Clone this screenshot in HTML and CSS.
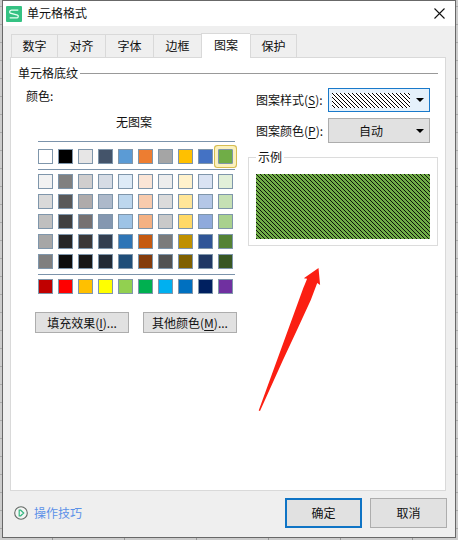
FILE: index.html
```html
<!DOCTYPE html>
<html lang="zh-CN">
<head>
<meta charset="utf-8">
<title>单元格格式</title>
<link rel="stylesheet" href="styles.css">
</head>
<body>
<main class="dialog">
  <header class="titlebar">
    <svg class="logo" width="16" height="16" viewBox="0 0 16 16"><rect width="16" height="16" rx="1" fill="#35c283"/><path d="M12.3 4.2H5.4a1.7 1.7 0 0 0-1.100 3l7.200 1.900a1.500 1.500 0 0 1-.9 2.800H3.700" fill="none" stroke="#e9fff3" stroke-width="1.3"/></svg>
    <h1>单元格格式</h1>
    <svg class="close" width="11" height="11" viewBox="0 0 11 11"><path d="M.5.5l10 10M10.500.5l-10 10" stroke="#111" stroke-width="1.1"/></svg>
  </header>
  <nav class="tabs">
    <span class="tab">数字</span><span class="tab">对齐</span><span class="tab">字体</span><span class="tab">边框</span><span class="tab active">图案</span><span class="tab last">保护</span>
  </nav>
  <section class="panel">
    <div class="heading">单元格底纹</div>
    <div class="columns">
      <div class="colors">
        <div class="label">颜色:</div>
        <div class="none">无图案</div>
        <div class="palette">
          <div class="group" id="theme"></div>
          <div class="group" id="tints"></div>
          <div class="group" id="standard"></div>
        </div>
        <div class="more">
          <button>填充效果(<u>I</u>)...</button>
          <button>其他颜色(<u>M</u>)...</button>
        </div>
      </div>
      <div class="pattern">
        <div class="field"><span>图案样式(<u>S</u>):</span>
          <div class="combo focus"><svg class="hatch" width="78" height="15"><defs><pattern id="stripe" width="4" height="4" patternUnits="userSpaceOnUse"><g shape-rendering="crispEdges"><rect width="1" height="1"/><rect x="1" y="1" width="1" height="1"/><rect x="2" y="2" width="1" height="1"/><rect x="3" y="3" width="1" height="1"/></g></pattern></defs><rect width="78" height="15" fill="#fff"/><rect width="78" height="15" fill="url(#stripe)"/></svg><i class="caret"></i></div>
        </div>
        <div class="field second"><span>图案颜色(<u>P</u>):</span>
          <div class="combo tall"><b>自动</b><i class="caret"></i></div>
        </div>
        <div class="sample">
          <span class="legend">示例</span>
          <svg width="174" height="65"><rect width="174" height="65" fill="#70ad47"/><rect width="174" height="65" fill="url(#stripe)" opacity=".88"/></svg>
        </div>
      </div>
    </div>
  </section>
  <footer>
    <svg width="14" height="14" viewBox="0 0 14 14"><circle cx="7" cy="7" r="6.3" fill="#f5f5f5" stroke="#626964" stroke-width="1.1"/><path d="M5.200 4.200v5.600h1.500l3-2.800-3-2.800z" fill="none" stroke="#35b880" stroke-width="1.200"/></svg>
    <a>操作技巧</a>
    <button class="primary">确定</button>
    <button>取消</button>
  </footer>
</main>
<svg class="arrow" width="62" height="144" viewBox="0 0 62 144"><path d="M60.500 0L45.800 10.300l3.300.4Q47 16 45.300 20L30 62 .7 142.500l1.300.5L25 92 39 62 52.800 32l6.400-17 2.900 2z" fill="#fb1f12"/></svg>
<script src="palette.js"></script>
</body>
</html>
```
FILE: styles.css
```css
* { box-sizing: border-box; }
body {
  margin: 0;
  width: 458px;
  height: 540px;
  overflow: hidden;
  position: relative;
  padding-left: 2px;
  font: 12px/16px "Noto Sans CJK SC", sans-serif;
  color: #111;
  background:
    repeating-linear-gradient(to bottom, transparent 0 6px, #aaa 6px 7px, transparent 7px 18px),
    repeating-linear-gradient(to right, transparent 0 52px, #999 52px 53px, transparent 53px 72px) #ccc;
}
.dialog {
  width: 454px;
  height: 538px;
  border: 1px solid #686868;
  background: #efefef;
}
.titlebar {
  height: 25px;
  padding: 0 10px 0 3px;
  display: flex;
  align-items: center;
  background: #fff;
}
h1 { margin: 0 auto 2px 5px; font: inherit; }
.close { margin-bottom: 1px; }
.tabs {
  height: 31px;
  padding-left: 8px;
  display: flex;
  align-items: flex-end;
}
.tab {
  width: 48px;
  height: 23px;
  border: 1px solid #d9d9d9;
  border-width: 1px 0 0 1px;
  text-align: center;
  line-height: 22px;
}
.tab:first-child { width: 46px; }
.tab.active {
  position: relative;
  width: 49px;
  height: 25px;
  margin-bottom: -1px;
  background: #fff;
}
.tab.last { width: 47px; border-right-width: 1px; }
.panel {
  width: 436px;
  height: 434px;
  margin-left: 7px;
  padding: 7px 7px;
  border: 1px solid #d9d9d9;
  background: #fff;
}
.heading { display: flex; align-items: center; gap: 2px; height: 16px; }
.heading::after { content: ""; flex: 1; height: 1px; background: #999; }
.columns { display: flex; }
.colors { width: 230px; padding: 7px 0 0 8px; }
.none { padding-left: 90px; margin-top: 10px; }
.palette { width: 197px; margin: 11px 0 0 12px; }
.group {
  display: grid;
  grid-template-columns: repeat(10, 15px);
  grid-auto-rows: 15px;
  gap: 5px;
  padding: 4px 0;
  border-top: 1px solid #7b93ab;
}
#theme { padding-top: 7px; padding-bottom: 5px; }
#tints { padding-bottom: 5px; }
.swatch { border: 1px solid #7f96ab; }
.swatch.selected { box-shadow: 0 0 0 3px #fbf1bd, 0 0 0 4px #d6bd52; border-radius: 1px; }
.more { display: flex; gap: 14px; margin: 14px 0 0 9px; }
button {
  margin: 0;
  padding: 0;
  border: 1px solid #adadad;
  background: #e1e1e1;
  color: #111;
  font: inherit;
}
.more button { width: 94px; height: 21px; line-height: 19px; white-space: nowrap; }
u { text-underline-offset: 2px; }
.pattern { width: 190px; padding-top: 7px; }
.field { display: flex; align-items: center; justify-content: space-between; padding: 0 8px; }
.field.second { margin-top: 6px; }
.combo {
  width: 102px;
  height: 24px;
  display: flex;
  align-items: center;
  justify-content: space-between;
  padding: 0 5px 0 3px;
  border: 1px solid #adadad;
  background: #e1e1e1;
}
.combo.focus { border-color: #1979ca; background: #e5f1fb; }
.combo.tall { height: 25px; }
.combo b { font-weight: 400; margin-left: 27px; }
.caret { border: 4px solid transparent; border-top-color: #000; border-bottom: 0; }
.sample {
  height: 89px;
  margin-top: 14px;
  padding: 16px 7px 0;
  border: 1px solid #dcdcdc;
  position: relative;
}
.sample svg { display: block; }
.legend { position: absolute; left: 7px; top: -9px; padding: 0 2px; background: #fff; }
footer { display: flex; align-items: center; padding: 7px 8px 0 11px; }
footer a { color: #5b91e8; margin: 0 auto 0 6px; }
footer button { width: 77px; height: 30px; margin-left: 8px; }
footer .primary { border: 2px solid #0f74c5; }
.arrow { position: absolute; left: 258px; top: 268px; overflow: visible; }
```
FILE: palette.js
```js
const groups = {
  theme: ["#fff #000 #e7e6e6 #44546a #5b9bd5 #ed7d31 #a5a5a5 #ffc000 #4472c4 #70ad47"],
  tints: [
    "#f2f2f2 #808080 #d0cece #d6dce5 #deebf7 #fbe5d6 #ededed #fff2cc #dae3f3 #e2f0d9",
    "#d9d9d9 #595959 #afabab #adb9ca #bdd7ee #f8cbad #dbdbdb #ffe699 #b4c7e7 #c5e0b4",
    "#bfbfbf #404040 #767171 #8497b0 #9dc3e6 #f4b183 #c9c9c9 #ffd966 #8faadc #a9d18e",
    "#a6a6a6 #262626 #3b3838 #333f50 #2e75b6 #c55a11 #7b7b7b #bf9000 #2f5597 #548235",
    "#7f7f7f #0d0d0d #171717 #222a35 #1f4e79 #843c0c #525252 #7f6000 #203864 #385723"
  ],
  standard: ["#c00000 #f00 #ffc000 #ff0 #92d050 #00b050 #00b0f0 #0070c0 #002060 #7030a0"]
};
for (const [id, rows] of Object.entries(groups)) {
  const box = document.getElementById(id);
  rows.join(" ").split(" ").forEach((color, i) => {
    const cell = document.createElement("div");
    cell.className = id === "theme" && i === 9 ? "swatch selected" : "swatch";
    cell.style.background = color;
    box.append(cell);
  });
}
```
